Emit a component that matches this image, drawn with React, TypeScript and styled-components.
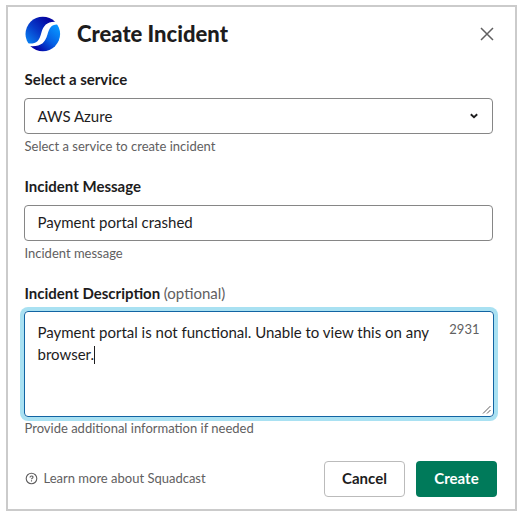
import React from "react";
import styled, { createGlobalStyle } from "styled-components";

const GlobalStyle = createGlobalStyle`
  *, *::before, *::after { box-sizing: border-box; }
  body {
    margin: 0;
    background: #fff;
    color: #1d1c1d;
    font-family: Lato, "Open Sans", sans-serif;
    font-size: 15px;
  }
`;

const Dialog = styled.main`
  width: 511px;
  height: 506px;
  margin: 5px 0 0 5.5px;
  padding: 0 22px 0 17px;
  border: 2px solid #cbcbcb;
  background: #fff;
`;

const Header = styled.header`
  display: flex;
  align-items: center;
  height: 54px;
  margin-right: -1px;

  svg { flex: none; }
`;

const Title = styled.h1`
  flex: 1;
  margin: 0 0 0 16.5px;
  font-size: 22px;
  font-weight: 900;
  line-height: 30px;
`;

const CloseButton = styled.button`
  display: flex;
  padding: 0;
  border: 0;
  background: none;
  color: #616061;
`;

const Field = styled.section<{ $height: number }>`
  height: ${(p) => p.$height}px;
`;

const Label = styled.label<{ $gap?: number }>`
  display: block;
  height: ${(p) => p.$gap ?? 37}px;
  padding-top: 7px;
  font-weight: 700;
  line-height: 22px;
`;

const Optional = styled.span`
  color: #616061;
  font-weight: 400;
`;

const Control = styled.div<{ $lift?: number }>`
  display: flex;
  align-items: center;
  justify-content: space-between;
  width: 469px;
  height: 36px;
  margin-left: -0.5px;
  padding: 0 13.5px ${(p) => p.$lift ?? 0}px 12.5px;
  border: 1px solid #868686;
  border-radius: 4px;
  line-height: 22px;
`;

const TextArea = styled.div`
  position: relative;
  display: flex;
  width: 470px;
  height: 106px;
  margin-left: -0.5px;
  padding: 9px 13.5px 0 12.5px;
  border: 1px solid #1264a3;
  border-radius: 4px;
  box-shadow: 0 0 0 4px #a9e1f2;
  line-height: 22px;
`;

const Copy = styled.p`
  flex: 1;
  margin: 0;
  white-space: nowrap;
`;

const Caret = styled.span`
  display: inline-block;
  width: 1px;
  height: 18px;
  margin-left: -0.5px;
  background: #1d1c1d;
  vertical-align: -4px;
`;

const Counter = styled.span`
  padding-top: 1px;
  color: #616061;
  font-size: 13px;
  line-height: 15px;
`;

const ResizeGrip = styled.svg`
  position: absolute;
  right: 1px;
  bottom: 1px;
`;

const Hint = styled.p<{ $gap?: number }>`
  margin: ${(p) => p.$gap ?? 2}px 0 0;
  color: #616061;
  font-size: 13px;
  line-height: 20px;
`;

const Footer = styled.footer`
  display: flex;
  align-items: center;
  height: 36px;
  margin-right: -4px;
`;

const HelpLink = styled.a`
  display: flex;
  flex: 1;
  align-items: center;
  gap: 6px;
  padding-bottom: 2px;
  color: #616061;
  font-size: 13px;
`;

const Button = styled.button<{ $primary?: boolean }>`
  width: 81px;
  height: 36px;
  margin-left: ${(p) => (p.$primary ? 11 : 0)}px;
  padding: 0 0 2px 1px;
  border: ${(p) => (p.$primary ? "0" : "1px solid #bbb")};
  border-radius: 4px;
  background: ${(p) => (p.$primary ? "#007a5a" : "#fff")};
  color: ${(p) => (p.$primary ? "#fff" : "#1d1c1d")};
  font: 700 15px Lato, sans-serif;
`;

const Logo = () => (
  <svg width="36" height="36" viewBox="0 0 36 36" aria-hidden="true">
    <defs>
      <linearGradient id="upper" x1="2" y1="26" x2="24" y2="4" gradientUnits="userSpaceOnUse">
        <stop offset="0" stopColor="#0a7ff0" />
        <stop offset="0.5" stopColor="#0638c8" />
        <stop offset="1" stopColor="#0505a0" />
      </linearGradient>
      <linearGradient id="lower" x1="33" y1="12" x2="13" y2="34" gradientUnits="userSpaceOnUse">
        <stop offset="0" stopColor="#0794ff" />
        <stop offset="0.5" stopColor="#0660e4" />
        <stop offset="1" stopColor="#0404a6" />
      </linearGradient>
      <clipPath id="disc">
        <circle cx="17.8" cy="18" r="17.3" />
      </clipPath>
    </defs>
    <g clipPath="url(#disc)">
      <path d="M36 5.8H29.5C21.8 6 18.5 9.5 16.3 17C14.2 24.8 12 27.6 5 27.6H0V0H36Z" fill="url(#upper)" />
      <path d="M36 8.4H32C26 8.6 24.3 12 22.4 18.8C20 26.8 16 30.4 7 30.2H0V36H36Z" fill="url(#lower)" />
    </g>
  </svg>
);

export default function App() {
  return (
    <>
      <GlobalStyle />
      <Dialog>
        <Header>
          <Logo />
          <Title>Create Incident</Title>
          <CloseButton aria-label="Close">
            <svg width="14" height="14" viewBox="0 0 14 14" fill="none" stroke="currentColor" strokeWidth="1.5">
              <path d="M1 1L13 13M13 1L1 13" />
            </svg>
          </CloseButton>
        </Header>
        <Field $height={107}>
          <Label>Select a service</Label>
          <Control>
            AWS Azure
            <svg width="10" height="8" viewBox="0 0 10 8" fill="none" stroke="#1d1c1d" strokeWidth="1.9">
              <path d="M1.8 2.3L5 5.2L8.2 2.3" />
            </svg>
          </Control>
          <Hint>Select a service to create incident</Hint>
        </Field>
        <Field $height={107}>
          <Label>Incident Message</Label>
          <Control $lift={2}>Payment portal crashed</Control>
          <Hint>Incident message</Hint>
        </Field>
        <Field $height={186}>
          <Label $gap={36}>
            Incident Description <Optional>(optional)</Optional>
          </Label>
          <TextArea>
            <Copy>
              Payment portal is not functional. Unable to view this on any
              <br />
              browser.
              <Caret />
            </Copy>
            <Counter>2931</Counter>
            <ResizeGrip width="10" height="10" viewBox="0 0 10 10" stroke="#616061" fill="none">
              <path d="M1 8.5L8.5 1M5 8.5L8.5 5" />
            </ResizeGrip>
          </TextArea>
          <Hint $gap={1}>Provide additional information if needed</Hint>
        </Field>
        <Footer>
          <HelpLink>
            <svg width="13" height="13" viewBox="0 0 13 13" fill="none" stroke="#616061">
              <circle cx="6.5" cy="6.5" r="5.3" strokeWidth="1.1" />
              <path d="M5 5.4C5 3.5 8 3.6 8 5.2C8 6.3 6.5 6.2 6.5 7.3M6.5 8.3V9.4" strokeWidth="1.1" />
            </svg>
            Learn more about Squadcast
          </HelpLink>
          <Button>Cancel</Button>
          <Button $primary>Create</Button>
        </Footer>
      </Dialog>
    </>
  );
}
